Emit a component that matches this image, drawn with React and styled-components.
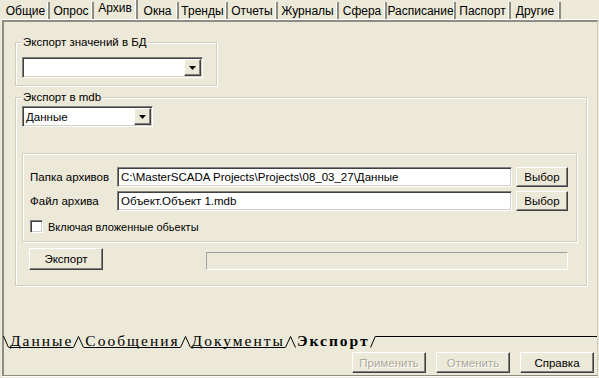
import React from 'react';
import styled, { createGlobalStyle } from 'styled-components';

const GlobalStyle = createGlobalStyle`
    html, body {
        margin: 0;
        padding: 0;
        background: #ECE9D8;
    }
    body {
        font-family: "Liberation Sans", Arial, sans-serif;
        font-size: 11px;
        color: #000;
    }
`;

const Window = styled.div`
    width: 599px;
    height: 378px;
    background: #ECE9D8;
    display: flex;
    flex-direction: column;
    overflow: hidden;
`;

const TabBar = styled.div`
    display: flex;
    height: 19px;
    padding-left: 3px;
    align-items: flex-end;
`;

const TopTab = styled.div`
    box-sizing: border-box;
    width: ${({ $w }) => $w}px;
    height: ${({ $active }) => ($active ? 19 : 17)}px;
    line-height: ${({ $active }) => ($active ? 17 : 18)}px;
    font-size: 12px;
    text-align: center;
    white-space: nowrap;
    border-right: 2px solid #8d8d84;
    box-shadow: inset -1px 0 0 #fff;
`;

const Page = styled.div`
    margin: 1px 0 0 2px;
    width: 596px;
    height: 356px;
    box-sizing: border-box;
    border-top: 2px solid #8d8d84;
    border-left: 2px solid #8d8d84;
    border-bottom: 1px solid #8d8d84;
    border-right: 1px dotted #b4b3a8;
    box-shadow: 0 -1px 0 #fff, 0 1px 0 #fff;
    display: flex;
    flex-direction: column;
`;

const Content = styled.div`
    padding-left: 11px;
    display: flex;
    flex-direction: column;
`;

const GroupBox = styled.div`
    position: relative;
    box-sizing: border-box;
    width: ${({ $w }) => $w}px;
    height: ${({ $h }) => $h}px;
    margin-top: ${({ $mt }) => $mt}px;
    border: 1px solid #D0D0BF;
    box-shadow: inset 1px 1px 0 #fff, 1px 1px 0 #fff;
    padding: ${({ $pad }) => $pad};
    display: flex;
    flex-direction: column;
    align-items: flex-start;
`;

const Caption = styled.span`
    position: absolute;
    top: -8px;
    left: 6px;
    padding: 0 1px;
    line-height: 14px;
    font-size: 11.5px;
    background: #ECE9D8;
    white-space: nowrap;
`;

const Combo = styled.div`
    box-sizing: border-box;
    width: ${({ $w }) => $w}px;
    height: 21px;
    background: #fff;
    border: 1px solid;
    border-color: #808080 #fff #fff #808080;
    box-shadow: inset 1px 1px 0 #404040, inset -1px -1px 0 #d4d0c8;
    display: flex;
    align-items: center;
    padding: 1px 1px 1px 3px;
`;

const ComboText = styled.span`
    flex: 1;
    white-space: nowrap;
    font-size: 11.5px;
`;

const DropButton = styled.div`
    box-sizing: border-box;
    width: 17px;
    height: 17px;
    background: #ECE9D8;
    border: 1px solid;
    border-color: #fff #404040 #404040 #fff;
    box-shadow: inset -1px -1px 0 #808080;
    display: flex;
    align-items: center;
    justify-content: center;
`;

const Arrow = () => (
    <svg width="7" height="4" viewBox="0 0 7 4">
        <path d="M0 0h7L3.5 4z" fill="#000" />
    </svg>
);

const InnerBox = styled(GroupBox)``;

const FieldRow = styled.div`
    display: flex;
    align-items: center;
    margin-top: ${({ $mt }) => $mt || 0}px;
`;

const FieldLabel = styled.span`
    width: 87px;
    font-size: 11.5px;
    white-space: nowrap;
`;

const TextField = styled.div`
    box-sizing: border-box;
    width: 395px;
    height: 20px;
    background: #fff;
    border: 1px solid;
    border-color: #808080 #fff #fff #808080;
    box-shadow: inset 1px 1px 0 #404040, inset -1px -1px 0 #d4d0c8;
    padding: 0 3px;
    line-height: 18px;
    font-size: 11.5px;
    white-space: nowrap;
    overflow: hidden;
`;

const Button = styled.button`
    box-sizing: border-box;
    width: ${({ $w }) => $w}px;
    height: ${({ $h }) => $h || 20}px;
    margin-left: ${({ $ml }) => $ml || 0}px;
    padding: 0;
    font-family: "Liberation Sans", Arial, sans-serif;
    font-size: 11.5px;
    color: ${({ disabled }) => (disabled ? '#aca899' : '#000')};
    background: #ECE9D8;
    border: 1px solid;
    border-color: #fff #404040 #404040 #fff;
    box-shadow: inset -1px -1px 0 #808080;
    text-shadow: ${({ disabled }) => (disabled ? '1px 1px 0 #fff' : 'none')};
`;

const CheckRow = styled.label`
    display: flex;
    align-items: center;
    gap: 5px;
    margin-top: 9px;
`;

const CheckBox = styled.span`
    box-sizing: border-box;
    width: 13px;
    height: 13px;
    background: #fff;
    border: 1px solid;
    border-color: #808080 #fff #fff #808080;
    box-shadow: inset 1px 1px 0 #404040, inset -1px -1px 0 #d4d0c8;
`;

const ExportRow = styled.div`
    display: flex;
    align-items: flex-end;
    margin-top: 6px;
`;

const Progress = styled.div`
    box-sizing: border-box;
    width: 362px;
    height: 18px;
    margin-left: 103px;
    border: 1px solid;
    border-color: #a0a0a0 #fff #fff #a0a0a0;
`;

const SheetTabs = styled.div`
    display: flex;
    align-items: flex-start;
    height: 12px;
    margin-top: 50px;
    margin-left: -1px;
`;

const SheetTab = styled.span`
    box-sizing: border-box;
    height: 12px;
    line-height: 9px;
    padding: 0 0 0 1px;
    font-family: "Liberation Serif", "Times New Roman", serif;
    font-size: 15.5px;
    letter-spacing: 2px;
    font-weight: ${({ $active }) => ($active ? 700 : 400)};
    border-bottom: 1px solid ${({ $active }) => ($active ? 'transparent' : '#000')};
    white-space: nowrap;
`;

const SheetRest = styled.div`
    flex: 1;
    height: 12px;
    border-top: 1px solid #000;
    box-sizing: border-box;
`;

const Slant = ({ dir }) => {
    const d = dir === 'down' ? 'M0.5 0L5.5 11.5' : dir === 'up' ? 'M0.5 11.5L5.5 0' : 'M0.5 11.5L5.5 0.5L10.5 11.5';
    const w = dir === 'both' ? 11 : 6;
    return (
        <svg width={w} height="12" viewBox={`0 0 ${w} 12`} style={{ flex: 'none' }}>
            <path d={d} stroke="#000" strokeWidth="1" fill="none" />
        </svg>
    );
};

const ButtonRow = styled.div`
    display: flex;
    justify-content: flex-end;
    gap: 10px;
    margin-top: 4px;
    padding-right: 3px;
`;

const topTabs = [
    ['Общие', 47], ['Опрос', 44], ['Архив', 44], ['Окна', 41], ['Тренды', 49], ['Отчеты', 50],
    ['Журналы', 61], ['Сфера', 48], ['Расписание', 69], ['Паспорт', 55], ['Другие', 50],
];

export default function App() {
    return (
        <>
            <GlobalStyle />
            <Window>
                <TabBar>
                    {topTabs.map(([t, w]) => (
                        <TopTab key={t} $w={w} $active={t === 'Архив'}>{t}</TopTab>
                    ))}
                </TabBar>
                <Page>
                    <Content>
                        <GroupBox $w={202} $h={44} $mt={20} $pad="14px 0 0 6px">
                            <Caption>Экспорт значений в БД</Caption>
                            <Combo $w={181}>
                                <ComboText />
                                <DropButton><Arrow /></DropButton>
                            </Combo>
                        </GroupBox>
                        <GroupBox $w={572} $h={189} $mt={11} $pad="8px 0 0 6px">
                            <Caption>Экспорт в mdb</Caption>
                            <Combo $w={131}>
                                <ComboText>Данные</ComboText>
                                <DropButton><Arrow /></DropButton>
                            </Combo>
                            <InnerBox $w={555} $h={89} $mt={26} $pad="13px 0 0 7px">
                                <FieldRow>
                                    <FieldLabel>Папка архивов</FieldLabel>
                                    <TextField>C:\MasterSCADA Projects\Projects\08_03_27\Данные</TextField>
                                    <Button $w={52} $ml={4}>Выбор</Button>
                                </FieldRow>
                                <FieldRow $mt={4}>
                                    <FieldLabel>Файл архива</FieldLabel>
                                    <TextField>Объект.Объект 1.mdb</TextField>
                                    <Button $w={52} $ml={4}>Выбор</Button>
                                </FieldRow>
                                <CheckRow>
                                    <CheckBox />
                                    Включая вложенные обьекты
                                </CheckRow>
                            </InnerBox>
                            <ExportRow>
                                <Button $w={74} $h={22} $ml={7}>Экспорт</Button>
                                <Progress />
                            </ExportRow>
                        </GroupBox>
                    </Content>
                    <SheetTabs>
                        <Slant dir="down" />
                        <SheetTab>Данные</SheetTab>
                        <Slant dir="both" />
                        <SheetTab>Сообщения</SheetTab>
                        <Slant dir="both" />
                        <SheetTab>Документы</SheetTab>
                        <Slant dir="both" />
                        <SheetTab $active>Экспорт</SheetTab>
                        <Slant dir="up" />
                        <SheetRest />
                    </SheetTabs>
                    <ButtonRow>
                        <Button $w={74} $h={21} disabled>Применить</Button>
                        <Button $w={74} $h={21} disabled>Отменить</Button>
                        <Button $w={74} $h={21}>Справка</Button>
                    </ButtonRow>
                </Page>
            </Window>
        </>
    );
}
